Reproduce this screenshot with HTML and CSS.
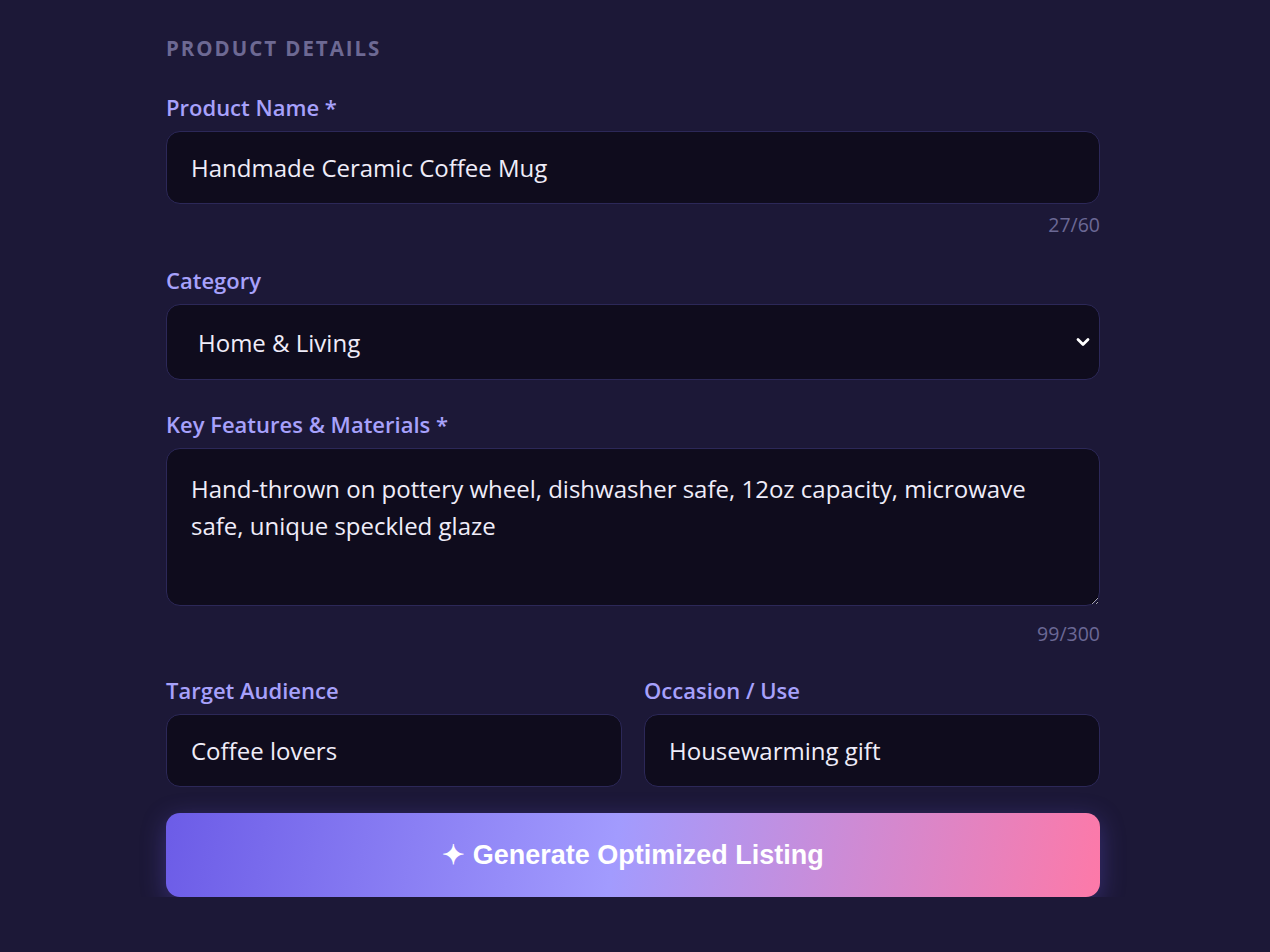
FILE: index.html
```html
<!DOCTYPE html>
<html lang="en">
<head>
<meta charset="utf-8">
<title>Product Details</title>
<link rel="stylesheet" href="styles.css">
</head>
<body>
<main class="form">
  <h2 class="section-title">PRODUCT DETAILS</h2>

  <div class="field">
    <label class="label" for="name">Product Name *</label>
    <input class="control" id="name" type="text" value="Handmade Ceramic Coffee Mug">
    <div class="counter">27/60</div>
  </div>

  <div class="field">
    <label class="label" for="cat">Category</label>
    <select class="control select" id="cat">
      <option>Home &amp; Living</option>
    </select>
  </div>

  <div class="field">
    <label class="label" for="feat">Key Features &amp; Materials *</label>
    <textarea class="control textarea" id="feat">Hand-thrown on pottery wheel, dishwasher safe, 12oz capacity, microwave safe, unique speckled glaze</textarea>
    <div class="counter counter-ta">99/300</div>
  </div>

  <div class="row">
    <div class="col">
      <label class="label" for="aud">Target Audience</label>
      <input class="control" id="aud" type="text" value="Coffee lovers">
    </div>
    <div class="col">
      <label class="label" for="occ">Occasion / Use</label>
      <input class="control" id="occ" type="text" value="Housewarming gift">
    </div>
  </div>

  <button class="generate" type="button">✦ Generate Optimized Listing</button>
</main>
</body>
</html>
```

FILE: styles.css
```css
* { box-sizing: border-box; }

html, body {
  margin: 0;
  background: #1c1837;
  font-family: "Open Sans", "Noto Sans", sans-serif;
  color: #efedf9;
}

.form {
  width: 934px;
  margin-left: 166px;
  padding-top: 34px;
}

.section-title {
  margin: 0 0 32px;
  font-size: 20.5px;
  line-height: 28px;
  font-weight: 700;
  letter-spacing: 1.95px;
  color: #6d6993;
}

.field {
  margin-bottom: 31px;
}

.label {
  display: block;
  font-size: 22px;
  line-height: 26px;
  font-weight: 600;
  color: #a7a1fb;
  margin-bottom: 11px;
}

.control {
  display: block;
  width: 100%;
  height: 73px;
  padding: 0 24px;
  background: #0f0c1d;
  border: 1.5px solid #2c2858;
  border-radius: 14px;
  font-family: inherit;
  font-size: 24px;
  color: #efedf9;
  outline: none;
}

.select {
  height: 76px;
  padding: 0 50px 0 31px;
  appearance: none;
  -webkit-appearance: none;
  background-image: url("data:image/svg+xml,%3Csvg xmlns='http://www.w3.org/2000/svg' width='14' height='10' viewBox='0 0 14 10'%3E%3Cpath d='M2 2.5l5 5 5-5' fill='none' stroke='white' stroke-width='2.8' stroke-linecap='round' stroke-linejoin='round'/%3E%3C/svg%3E");
  background-repeat: no-repeat;
  background-position: right 9px center;
}

.textarea {
  height: 158px;
  padding: 21px 24px;
  line-height: 37px;
  resize: vertical;
}

.counter {
  margin-top: 10px;
  text-align: right;
  font-size: 19.5px;
  line-height: 22px;
  color: #6b6895;
}

.counter-ta {
  margin-top: 17px;
}

.row {
  display: grid;
  grid-template-columns: 1fr 1fr;
  gap: 22px;
  margin-top: 32px;
}

.col .control { height: 73px; }

.generate {
  display: block;
  width: 100%;
  height: 84px;
  margin-top: 26px;
  border: none;
  border-radius: 14px;
  background: linear-gradient(100deg, #6c5ce7 0%, #a29bfe 48%, #fd79a8 100%);
  box-shadow: 0 6px 24px rgba(108, 92, 231, 0.35);
  font-family: "Liberation Sans", Arial, sans-serif;
  font-weight: 700;
  font-size: 27px;
  color: #ffffff;
}
```
